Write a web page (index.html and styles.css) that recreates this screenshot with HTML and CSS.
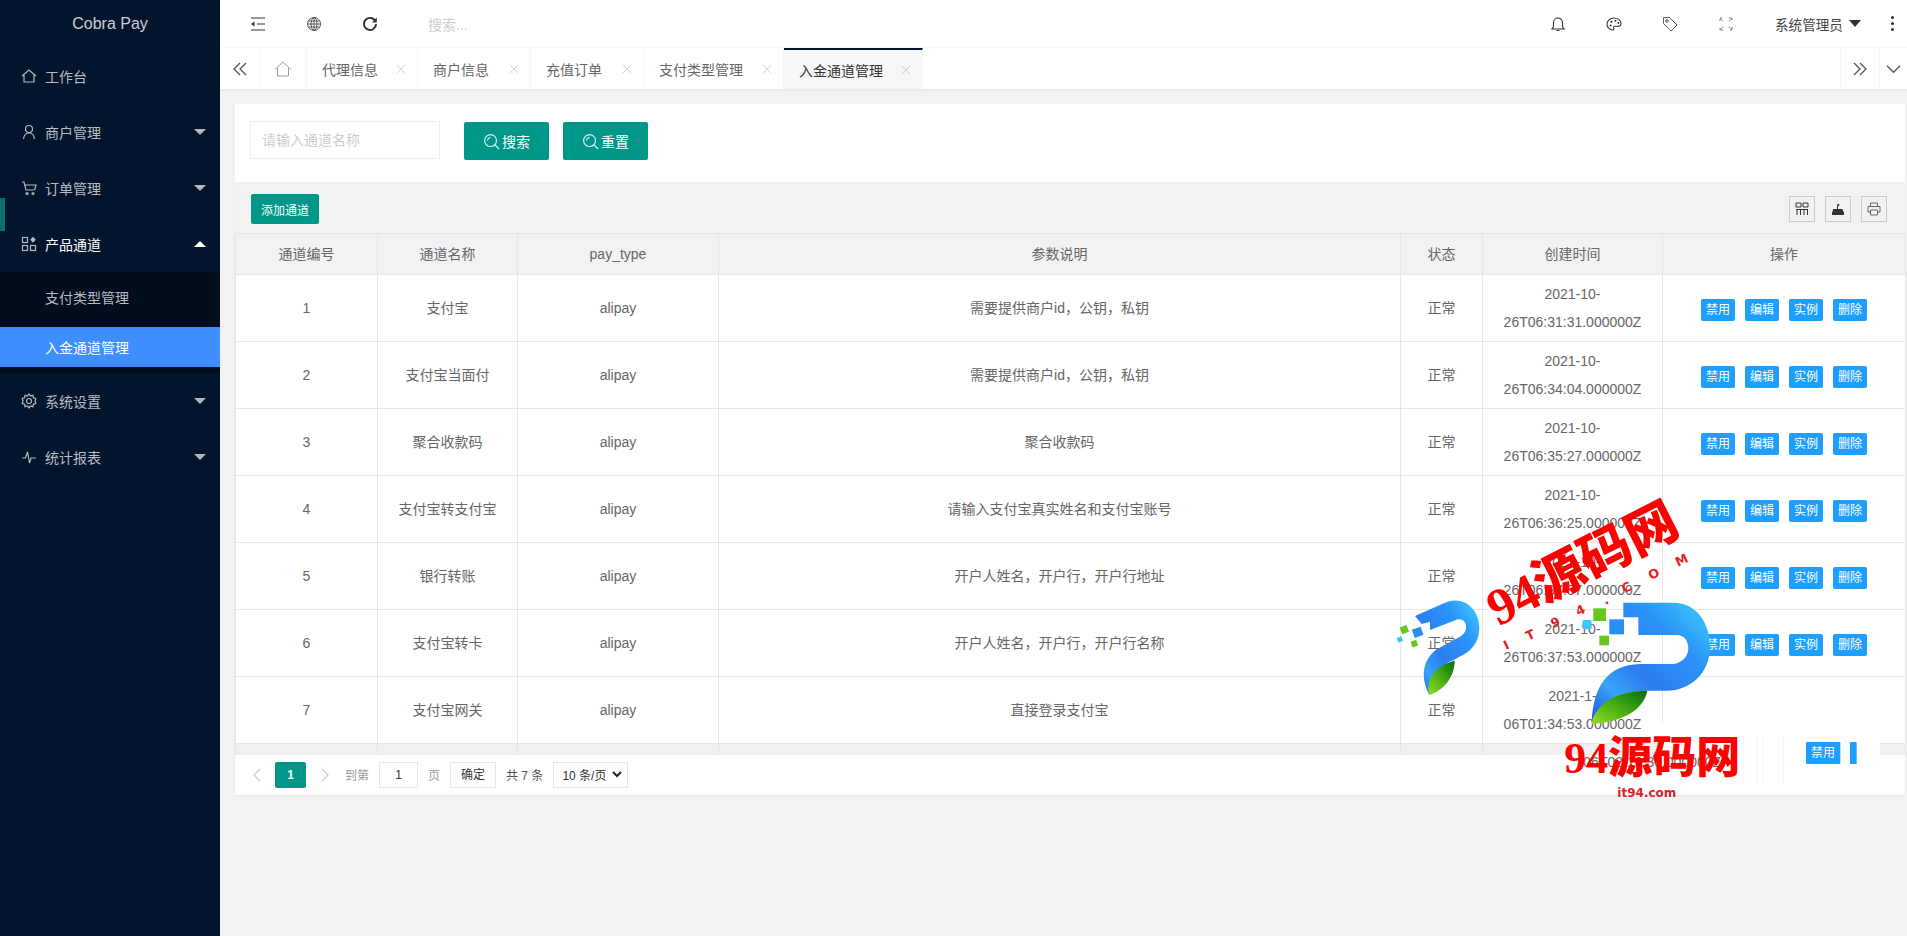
FILE: index.html
```html
<!DOCTYPE html>
<html lang="zh">
<head>
<meta charset="utf-8">
<title>Cobra Pay</title>
<link rel="stylesheet" href="styles.css">
</head>
<body>
<div class="app">
  <aside class="sidebar">
    <div class="logo">Cobra Pay</div>
    <span class="side-mark"></span>
    <nav class="menu">
      <a class="menu-item"><svg class="mi" viewBox="0 0 16 16"><path d="M1 8 8 2l7 6M3 7v7h10V7"/></svg><span>工作台</span></a>
      <a class="menu-item"><svg class="mi" viewBox="0 0 16 16"><circle cx="8" cy="5" r="3.500"/><path d="M2.500 15c.5-4 2.500-6 5.500-6s5 2 5.500 6"/></svg><span>商户管理</span><i class="caret"></i></a>
      <a class="menu-item"><svg class="mi" viewBox="0 0 16 16"><path d="M1 2h2l2 8h8M4 5h11l-1.500 5"/><circle cx="6" cy="13.500" r="1"/><circle cx="12" cy="13.500" r="1"/></svg><span>订单管理</span><i class="caret"></i></a>
      <a class="menu-item open"><svg class="mi" viewBox="0 0 16 16"><rect x="1.500" y="1.500" width="5" height="5"/><rect x="1.500" y="9.500" width="5" height="5"/><rect x="9.500" y="9.500" width="5" height="5"/><path class="fill" d="m12 .8 2.800 3-2.800 3-2.800-3z"/></svg><span>产品通道</span><i class="caret up"></i></a>
      <div class="submenu">
        <a class="sub-item first">支付类型管理</a>
        <a class="sub-item active">入金通道管理</a>
      </div>
      <a class="menu-item"><svg class="mi" viewBox="0 0 16 16"><circle cx="8" cy="8" r="2.500"/><path d="M8 1l1.500 2 2.400-.7.500 2.400 2.400.8-.8 2.500.8 2.500-2.400.8-.5 2.400-2.400-.7L8 15l-1.500-2-2.400.7-.5-2.400-2.400-.8.8-2.500-.8-2.500 2.400-.8.500-2.400 2.400.7z"/></svg><span>系统设置</span><i class="caret"></i></a>
      <a class="menu-item"><svg class="mi" viewBox="0 0 16 16"><path d="M1 9h3.500l2-6 2 11 1.500-5h5"/></svg><span>统计报表</span><i class="caret"></i></a>
    </nav>
  </aside>

  <main class="main">
    <header class="topbar">
      <div class="top-icons">
        <span class="tb"><svg viewBox="0 0 16 16" class="ti"><path d="M1 2h14M7 8h8M1 14h14"/><path class="fill" d="M1 8l3.500-2.500v5z"/></svg></span>
        <span class="tb"><svg viewBox="0 0 16 16" class="ti thin"><circle cx="8" cy="8" r="6.500"/><ellipse cx="8" cy="8" rx="3" ry="6.500"/><path d="M8 1.500v13M1.500 8h13M2.500 5h11M2.500 11h11"/></svg></span>
        <span class="tb"><svg viewBox="0 0 16 16" class="ti bold"><path d="M13.500 5.500A6 6 0 1 0 14 8"/><path class="fill" d="M14.800 1.500v5h-5z"/></svg></span>
        <span class="top-search">搜索...</span>
      </div>
      <div class="top-right">
        <span class="tb"><svg viewBox="0 0 16 16" class="ti"><path d="M2 13h12c-1-1-1.500-2-1.500-3V6.500a4.500 4.500 0 0 0-9 0V10c0 1-.5 2-1.500 3zM6.500 14.500h3"/></svg></span>
        <span class="tb"><svg viewBox="0 0 16 16" class="ti"><path d="M8 2C4 2 1 4.800 1 8.300S4 14 6.800 14c1.500 0 1.200-1.500.8-2.300-.3-.9.300-1.500 1.300-1.500h2.600c1.700 0 3.500-.7 3.500-2.800C15 4.500 12 2 8 2z"/><circle class="fill" cx="4.500" cy="9.500" r="1"/><circle class="fill" cx="5.500" cy="5.700" r="1"/><circle class="fill" cx="9.500" cy="4.700" r="1"/><circle class="fill" cx="12.300" cy="7" r=".9"/></svg></span>
        <span class="tb"><svg viewBox="0 0 16 16" class="ti thin"><path d="M1.500 1.500h6l7.500 7.500-6 6-7.500-7.500z"/><circle cx="5" cy="5" r="1.300"/></svg></span>
        <span class="tb"><svg viewBox="0 0 16 16" class="ti"><path d="M2 5V2h3M11 2h3v3M14 11v3h-3M5 14H2v-3M2 2l3 3M14 2l-3 3M14 14l-3-3M2 14l3-3" class="dim"/></svg></span>
        <span class="user">系统管理员<i class="user-caret"></i></span>
        <span class="dots"><i></i><i></i><i></i></span>
      </div>
    </header>

    <div class="tabbar">
      <span class="tab-btn wide"><svg viewBox="0 0 16 16" class="chev"><path d="M8 2 2 8l6 6M14 2 8 8l6 6"/></svg></span>
      <span class="tab-home"><svg viewBox="0 0 18 18" class="home"><path d="M1 9.500 9 2l8 7.500M3.500 8v8h11V8"/></svg></span>
      <span class="tab">代理信息<i class="x"></i></span>
      <span class="tab">商户信息<i class="x"></i></span>
      <span class="tab">充值订单<i class="x"></i></span>
      <span class="tab">支付类型管理<i class="x"></i></span>
      <span class="tab current">入金通道管理<i class="x"></i></span>
      <span class="tab-spacer"></span>
      <span class="tab-btn wide left"><svg viewBox="0 0 16 16" class="chev"><path d="M8 2l6 6-6 6M2 2l6 6-6 6"/></svg></span>
      <span class="tab-btn narrow"><svg viewBox="0 0 16 10" class="chev small"><path d="M1 1.500 8 8.500l7-7"/></svg></span>
    </div>

    <section class="content">
      <div class="filter-card">
        <span class="field">请输入通道名称</span>
        <button class="btn-teal first-btn"><svg viewBox="0 0 18 18" class="search-i"><circle cx="8" cy="8" r="6.300"/><path d="M12.500 12.500 17 17M4.800 8A3.200 3.200 0 0 1 8 4.800"/></svg>搜索</button>
        <button class="btn-teal"><svg viewBox="0 0 18 18" class="search-i"><circle cx="8" cy="8" r="6.300"/><path d="M12.500 12.500 17 17M4.800 8A3.200 3.200 0 0 1 8 4.800"/></svg>重置</button>
      </div>

      <div class="table-card">
        <div class="toolbar">
          <button class="btn-add">添加通道</button>
          <div class="tools">
            <span class="tool"><svg viewBox="0 0 14 14" class="tool-i"><path d="M1 1h5v4H1zM8 1h5v4H8zM1 7.500h12M2 7.500V13M5.500 7.500V13M9 7.500V13M12.500 7.500V13"/></svg></span>
            <span class="tool"><svg viewBox="0 0 14 14" class="tool-i"><path class="fill" d="M1 10h12v3H1zM2 7h9.500l1 3h-11zM6.500 1.500 9 3 6.500 4.500z"/><path d="M6.500 3v4"/></svg></span>
            <span class="tool"><svg viewBox="0 0 14 14" class="tool-i gray"><path d="M3.500 4V1h7v3M3.500 10H1V4.500h12V10h-2.500M3.500 8h7v5h-7z"/></svg></span>
          </div>
        </div>

        <table class="grid">
          <thead>
            <tr><th class="c1">通道编号</th><th class="c2">通道名称</th><th class="c3">pay_type</th><th class="c4">参数说明</th><th class="c5">状态</th><th class="c6">创建时间</th><th class="c7">操作</th></tr>
          </thead>
          <tbody>
            <tr><td>1</td><td>支付宝</td><td>alipay</td><td>需要提供商户id，公钥，私钥</td><td>正常</td><td>2021-10-26T06:31:31.000000Z</td><td><div class="ops"><a>禁用</a><a>编辑</a><a>实例</a><a>删除</a></div></td></tr>
            <tr><td>2</td><td>支付宝当面付</td><td>alipay</td><td>需要提供商户id，公钥，私钥</td><td>正常</td><td>2021-10-26T06:34:04.000000Z</td><td><div class="ops"><a>禁用</a><a>编辑</a><a>实例</a><a>删除</a></div></td></tr>
            <tr><td>3</td><td>聚合收款码</td><td>alipay</td><td>聚合收款码</td><td>正常</td><td>2021-10-26T06:35:27.000000Z</td><td><div class="ops"><a>禁用</a><a>编辑</a><a>实例</a><a>删除</a></div></td></tr>
            <tr><td>4</td><td>支付宝转支付宝</td><td>alipay</td><td>请输入支付宝真实姓名和支付宝账号</td><td>正常</td><td>2021-10-26T06:36:25.000000Z</td><td><div class="ops"><a>禁用</a><a>编辑</a><a>实例</a><a>删除</a></div></td></tr>
            <tr><td>5</td><td>银行转账</td><td>alipay</td><td>开户人姓名，开户行，开户行地址</td><td>正常</td><td>2021-10-26T06:37:07.000000Z</td><td><div class="ops"><a>禁用</a><a>编辑</a><a>实例</a><a>删除</a></div></td></tr>
            <tr><td>6</td><td>支付宝转卡</td><td>alipay</td><td>开户人姓名，开户行，开户行名称</td><td>正常</td><td>2021-10-26T06:37:53.000000Z</td><td><div class="ops"><a>禁用</a><a>编辑</a><a>实例</a><a>删除</a></div></td></tr>
            <tr><td>7</td><td>支付宝网关</td><td>alipay</td><td>直接登录支付宝</td><td>正常</td><td>2021-1-06T01:34:53.000000Z</td><td></td></tr>
            <tr class="strip"><td></td><td></td><td></td><td></td><td></td><td></td><td></td></tr>
          </tbody>
        </table>

        <div class="pager">
          <svg viewBox="0 0 8 14" class="pg-arrow"><path d="M7 1 1 7l6 6"/></svg>
          <span class="pg-cur">1</span>
          <svg viewBox="0 0 8 14" class="pg-arrow"><path d="m1 1 6 6-6 6"/></svg>
          <span class="pg-label">到第</span>
          <span class="pg-input">1</span>
          <span class="pg-label">页</span>
          <span class="pg-ok">确定</span>
          <span class="pg-count">共 7 条</span>
          <span class="pg-select">10 条/页<svg viewBox="0 0 10 7" class="sel-i"><path d="m1 1 4 4 4-4"/></svg></span>
        </div>
      </div>
    </section>
  </main>
</div>

<svg class="watermark" viewBox="0 0 1581 960" aria-hidden="true">
  <defs>
    <linearGradient id="pb" x1="1" y1="0" x2="0" y2="1">
      <stop offset="0" stop-color="#3fd0ff"/><stop offset=".3" stop-color="#2a93f8"/><stop offset=".6" stop-color="#2c7df0"/><stop offset=".78" stop-color="#37a5fa"/><stop offset="1" stop-color="#1f4fd8"/>
    </linearGradient>
    <linearGradient id="pg" x1="1" y1="0" x2="0" y2="1">
      <stop offset="0" stop-color="#0a6a08"/><stop offset=".35" stop-color="#2f9a10"/><stop offset="1" stop-color="#8fe020"/>
    </linearGradient>
  </defs>
  <rect class="wm-patch" x="840" y="665" width="660" height="200"/>
  <path class="wm-line" d="M1090 710v140M1132 700v150M1150 710v140M1210 710v140"/>
  <text class="wm-ghost" x="610" y="800">06T02:10:30.000000Z</text>
  <rect class="wm-btn" x="1278" y="726" width="103" height="66" rx="4"/>
  <text class="wm-btn-t" x="1329" y="772">禁用</text>
  <rect class="wm-btn" x="1410" y="726" width="20" height="66"/>

  <text class="wm-big" transform="translate(355 380) rotate(-27)">94源码网</text>
  <g class="wm-arc">
    <text transform="translate(378 450) rotate(-25)">I</text>
    <text transform="translate(445 422) rotate(-25)">T</text>
    <text transform="translate(520 385) rotate(-25)">9</text>
    <text transform="translate(595 348) rotate(-25)">4</text>
    <text transform="translate(676 315) rotate(-25)">.</text>
    <text transform="translate(733 280) rotate(-25)">C</text>
    <text transform="translate(812 240) rotate(-25)">O</text>
    <text transform="translate(893 200) rotate(-25)">M</text>
  </g>

  <path fill="url(#pb)" d="M105 348 195 308C250 285 298 325 298 385 298 430 270 458 235 472L222 480C185 490 160 530 148 585 120 530 128 480 170 448L240 410C258 400 262 380 255 368 248 356 235 356 222 362L150 390 150 365 125 372z"/>
  <path fill="url(#pg)" d="M224 482C224 530 192 570 148 585 135 540 165 497 224 482z"/>
  <rect class="g1" x="62" y="378" width="22" height="22" transform="rotate(-20 73 389)"/>
  <rect class="b1" x="99" y="384" width="28" height="26" transform="rotate(-20 113 397)"/>
  <rect class="c1s" x="52" y="411" width="15" height="15" transform="rotate(-20 59 418)"/>
  <rect class="g1" x="94" y="422" width="18" height="18" transform="rotate(-20 103 431)"/>

  <path fill="url(#pb)" d="M730 308H880C950 308 990 370 990 440 990 520 930 572 860 572H800C720 575 650 610 635 668 640 560 680 495 780 492H880C905 490 925 470 925 445 925 425 915 405 890 405H775V352H730z"/>
  <path fill="url(#pg)" d="M802 572C790 630 730 665 635 672 650 610 700 575 802 572z"/>
  <rect class="g1" x="640" y="325" width="38" height="38"/>
  <rect class="b1" x="688" y="358" width="44" height="45"/>
  <rect class="c1s" x="607" y="360" width="28" height="28" rx="6"/>
  <rect class="g1" x="658" y="407" width="29" height="29"/>

  <text class="wm-big two" x="553" y="820">94源码网</text>
  <text class="wm-site" x="712" y="892">it94.com</text>
</svg>
</body>
</html>
```

FILE: styles.css
```css
* { box-sizing: border-box; }
html, body { margin: 0; height: 100%; overflow: hidden; }
body {
  position: relative;
  font-family: "Liberation Sans", "Noto Sans CJK SC", sans-serif;
  font-size: 14px;
  color: #666;
  background: #f2f2f2;
}
svg { display: block; fill: none; }
.fill { fill: currentColor; stroke: none; }

.app { display: flex; height: 936px; }

/* sidebar */
.sidebar { position: relative; width: 220px; flex: none; background: #03152d; color: rgba(255,255,255,.72); }
.logo { height: 47px; line-height: 47px; text-align: center; font-size: 16px; color: rgba(255,255,255,.8); }
.side-mark { position: absolute; left: 0; top: 198px; width: 5px; height: 33px; background: #0b6f6b; }
.menu { display: block; padding-top: 1px; }
.menu-item { display: flex; align-items: center; height: 56px; padding: 0 14px 0 21px; }
.menu-item.open { color: #fff; }
.mi { width: 16px; height: 16px; margin-right: 8px; stroke: currentColor; stroke-width: 1.200; color: rgba(255,255,255,.7); }
.menu-item span { flex: 1; }
.caret { width: 0; height: 0; border: 6px solid transparent; border-top-color: rgba(255,255,255,.7); border-bottom: 0; }
.caret.up { border-top: 0; border-bottom: 6px solid #fff; }
.submenu { background: #020d1e; padding-bottom: 6px; }
.sub-item { display: flex; align-items: center; padding-left: 45px; height: 40px; }
.sub-item.first { height: 55px; padding-bottom: 5px; }
.sub-item.active { background: #3f8eff; color: #fff; }

/* main */
.main { flex: 1; min-width: 0; display: flex; flex-direction: column; }
.topbar { height: 48px; flex: none; background: #fff; display: flex; justify-content: space-between; align-items: center; border-bottom: 1px solid #f6f6f6; color: #333; }
.top-icons, .top-right { display: flex; align-items: center; }
.top-icons { padding-left: 10px; }
.tb { width: 56px; display: flex; justify-content: center; }
.ti { width: 16px; height: 16px; stroke: currentColor; stroke-width: 1.100; }
.ti.thin { stroke-width: .8; }
.ti.bold { stroke-width: 1.900; }
.ti .dim { stroke: #888; stroke-dasharray: 2 1; }
.top-search { margin-left: 30px; color: #ccc; font-size: 14px; }
.user { display: flex; align-items: center; margin-left: 21px; color: #444; font-size: 13.600px; width: 95px; }
.user-caret { width: 0; height: 0; margin-left: 6px; border: 6px solid transparent; border-top: 7px solid #333; border-bottom: 0; }
.dots { display: flex; flex-direction: column; gap: 3px; width: 37px; align-items: flex-start; padding-left: 21px; }
.dots i { width: 3px; height: 3px; border-radius: 50%; background: #333; }

/* tabs */
.tabbar { height: 43px; flex: none; background: #fff; display: flex; border-bottom: 2px solid #ebebeb; color: #666; }
.tab-btn { display: flex; align-items: center; justify-content: center; border-right: 1px solid #f6f6f6; }
.tab-btn.wide { width: 40px; }
.tab-btn.left { border-left: 1px solid #f6f6f6; border-right: 1px solid #f6f6f6; }
.tab-btn.narrow { width: 27px; border: 0; }
.chev { width: 16px; height: 16px; stroke: #555; stroke-width: 1.300; }
.chev.small { width: 15px; height: 10px; }
.tab-home { width: 47px; display: flex; align-items: center; justify-content: center; border-right: 1px solid #f6f6f6; }
.home { width: 18px; height: 18px; stroke: #999; stroke-width: 1; }
.tab { display: flex; align-items: center; padding: 0 0 0 15px; border-right: 1px solid #f6f6f6; position: relative; width: 113px; }
.tab:nth-of-type(3) { width: 111px; }
.tab:nth-of-type(6) { width: 140px; }
.tab.current { width: 139px; background: #f7f7f7; color: #333; border-top: 2px solid #03152d; }
.x { position: absolute; right: 12px; width: 8px; height: 8px;
  background: linear-gradient(45deg, transparent 44%, #d0d0d0 44%, #d0d0d0 56%, transparent 56%), linear-gradient(-45deg, transparent 44%, #d0d0d0 44%, #d0d0d0 56%, transparent 56%); }
.tab-spacer { flex: 1; }

/* content */
.content { flex: 1; min-height: 0; padding: 13px 2px 0 15px; }
.filter-card { height: 78px; background: #fff; display: flex; align-items: flex-start; padding: 17px 0 0 15px; }
.field { width: 190px; height: 38px; line-height: 36px; border: 1px solid #eee; padding-left: 11px; color: #ccc; background: #fff; }
.btn-teal { display: inline-flex; align-items: center; justify-content: center; gap: 2px; width: 85px; height: 38px; margin: 1px 0 0 14px; background: #009688; color: #fff; border: 0; border-radius: 2px; font: 14px "Liberation Sans", "Noto Sans CJK SC", sans-serif; padding: 0; }
.btn-teal.first-btn { margin-left: 24px; }
.search-i { width: 17px; height: 17px; stroke: #c5f5ee; stroke-width: 1.300; }

.table-card { background: #fff; box-shadow: 0 1px 2px rgba(0,0,0,.05); }
.toolbar { height: 51px; background: #f2f2f2; display: flex; justify-content: space-between; align-items: flex-start; padding: 12px 18px 0 16px; }
.btn-add { width: 68px; height: 30px; background: #009688; color: #fff; border: 0; border-radius: 2px; font: 12px "Liberation Sans", "Noto Sans CJK SC", sans-serif; padding: 0; }
.tools { display: flex; gap: 10px; padding-top: 2px; }
.tool { width: 26px; height: 26px; border: 1px solid #ccc; display: flex; align-items: center; justify-content: center; color: #333; }
.tool-i { width: 14px; height: 14px; stroke: currentColor; stroke-width: 1; }
.tool-i.gray { stroke: #666; }

.grid { width: 100%; table-layout: fixed; border-collapse: collapse; background: #fff; }
.grid th, .grid td { border: 1px solid #e6e6e6; padding: 0 15px; text-align: center; font-weight: 400; line-height: 28px; color: #666; }
.grid th { height: 41px; background: #f2f2f2; }
.grid td { height: 67px; }
.grid .strip td { height: 11px; padding: 0; line-height: 0; background: #f0f0f0; border-bottom: 0; }
.c1 { width: 142px; } .c2 { width: 140px; } .c3 { width: 201px; } .c4 { width: 682px; }
.c5 { width: 82px; } .c6 { width: 180px; } .c7 { width: 243px; }
.ops { display: flex; justify-content: center; gap: 10px; margin-top: 3px; }
.ops a { width: 34px; height: 22px; line-height: 22px; font-size: 12px; color: #fff; background: #1e9fff; border-radius: 2px; }

.pager { height: 40px; display: flex; align-items: center; padding-left: 18px; font-size: 12px; color: #666; }
.pg-arrow { width: 8px; height: 14px; stroke: #ccc; stroke-width: 1.300; margin: 0 14px 0 0; }
.pg-cur { width: 31px; height: 26px; line-height: 26px; text-align: center; background: #009688; color: #fff; font-weight: 700; border-radius: 2px; margin-right: 15px; }
.pg-label { color: #999; margin-right: 10px; }
.pg-arrow + .pg-label { margin-left: 2px; }
.pg-input { width: 39px; height: 26px; line-height: 24px; text-align: center; border: 1px solid #e6e6e6; color: #333; margin-right: 10px; }
.pg-ok { width: 46px; height: 26px; line-height: 24px; text-align: center; border: 1px solid #e6e6e6; color: #333; margin-right: 10px; }
.pg-count { color: #555; margin-right: 10px; }
.pg-select { width: 75px; height: 26px; display: flex; align-items: center; justify-content: space-between; padding: 0 5px 0 8px; border: 1px solid #e6e6e6; color: #333; }
.sel-i { width: 10px; height: 7px; stroke: #222; stroke-width: 2; }

/* watermark image over the page */
.watermark { position: absolute; left: 1380px; top: 500px; width: 527px; height: 320px; pointer-events: none; overflow: visible; }
.wm-patch { fill: #fff; }
.wm-line { stroke: #eee; stroke-width: 2; }
.wm-ghost { font: 42px "Liberation Sans", sans-serif; fill: #666; }
.wm-btn { fill: #1e9fff; }
.wm-btn-t { font: 36px "Noto Sans CJK SC", sans-serif; fill: #fff; text-anchor: middle; }
.wm-big { font: 900 155px "Liberation Serif", "Noto Sans CJK SC", serif; fill: #f00; }
.wm-big.two { font-size: 132px; }
.wm-arc { font: 700 38px "DejaVu Sans", sans-serif; fill: #e52020; }
.wm-site { font: 700 36px "DejaVu Sans", sans-serif; fill: #d8232a; }
.g1 { fill: #66c81e; }
.b1 { fill: #2b8cf5; }
.c1s { fill: #3cc8f5; }
```
